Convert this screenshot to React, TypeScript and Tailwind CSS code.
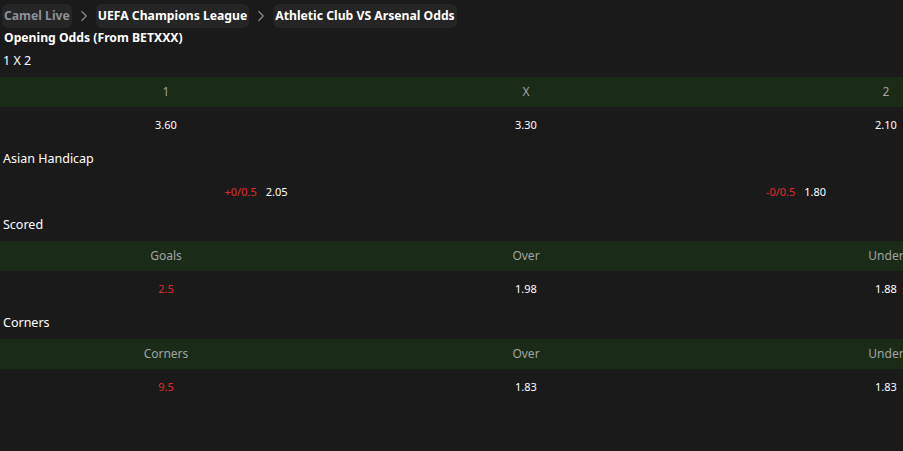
import { ChevronRight } from "lucide-react";

const crumbs = ["Camel Live", "UEFA Champions League", "Athletic Club VS Arsenal Odds"];

function HeaderRow({ cells }: { cells: string[] }) {
  return (
    <div className="grid h-[30px] w-[1052px] grid-cols-[332px_388px_332px] items-center bg-[#1a2b18] text-[12px] text-[#a3a3a3]">
      {cells.map((c) => (
        <div key={c} className="text-center">
          {c}
        </div>
      ))}
    </div>
  );
}

function ValueRow({ cells, firstRed }: { cells: string[]; firstRed?: boolean }) {
  return (
    <div className="grid h-[36px] w-[1052px] grid-cols-[332px_388px_332px] items-center text-[11px] text-white">
      {cells.map((c, i) => (
        <div key={i} className={i === 0 && firstRed ? "text-center text-[#e02a2a]" : "text-center"}>
          {c}
        </div>
      ))}
    </div>
  );
}

function Title({ children }: { children: string }) {
  return <div className="flex h-[32px] items-center px-[3px] pt-[1px] text-[12.5px] text-white">{children}</div>;
}

export default function App() {
  return (
    <div className="h-[451px] w-[903px] overflow-hidden bg-[#1a1a1a] font-['Noto_Sans',sans-serif]">
      <div className="flex h-[30px] items-center gap-[3px] px-[2px] pt-[2px]">
        {crumbs.map((c, i) => (
          <div key={c} className="flex items-center gap-[3px]">
            {i > 0 && <ChevronRight className="size-[18px] text-[#8a8a8a]" strokeWidth={1.6} />}
            <span
              className={
                i === 0
                  ? "rounded-md bg-[#252525] px-[2px] py-[3px] text-[12.2px] font-bold text-[#8b929c]"
                  : "rounded-md bg-[#252525] px-[2px] py-[3px] text-[12.2px] font-bold text-white"
              }
            >
              {c}
            </span>
          </div>
        ))}
      </div>
      <div className="h-[16px] px-[4px] text-[12.2px] leading-[16px] font-bold text-white">Opening Odds (From BETXXX)</div>
      <div className="flex h-[31px] items-center px-[3px] text-[12.5px] text-white">1 X 2</div>
      <HeaderRow cells={["1", "X", "2"]} />
      <ValueRow cells={["3.60", "3.30", "2.10"]} />
      <Title>Asian Handicap</Title>
      <div className="grid h-[34px] w-[1080px] grid-cols-[512px_568px] items-center text-[11px]">
        <div className="flex justify-center gap-[9px]">
          <span className="text-[#e02a2a]">+0/0.5</span>
          <span className="text-white">2.05</span>
        </div>
        <div className="flex justify-center gap-[9px]">
          <span className="text-[#e02a2a]">-0/0.5</span>
          <span className="text-white">1.80</span>
        </div>
      </div>
      <Title>Scored</Title>
      <HeaderRow cells={["Goals", "Over", "Under"]} />
      <ValueRow cells={["2.5", "1.98", "1.88"]} firstRed />
      <Title>Corners</Title>
      <HeaderRow cells={["Corners", "Over", "Under"]} />
      <ValueRow cells={["9.5", "1.83", "1.83"]} firstRed />
    </div>
  );
}
